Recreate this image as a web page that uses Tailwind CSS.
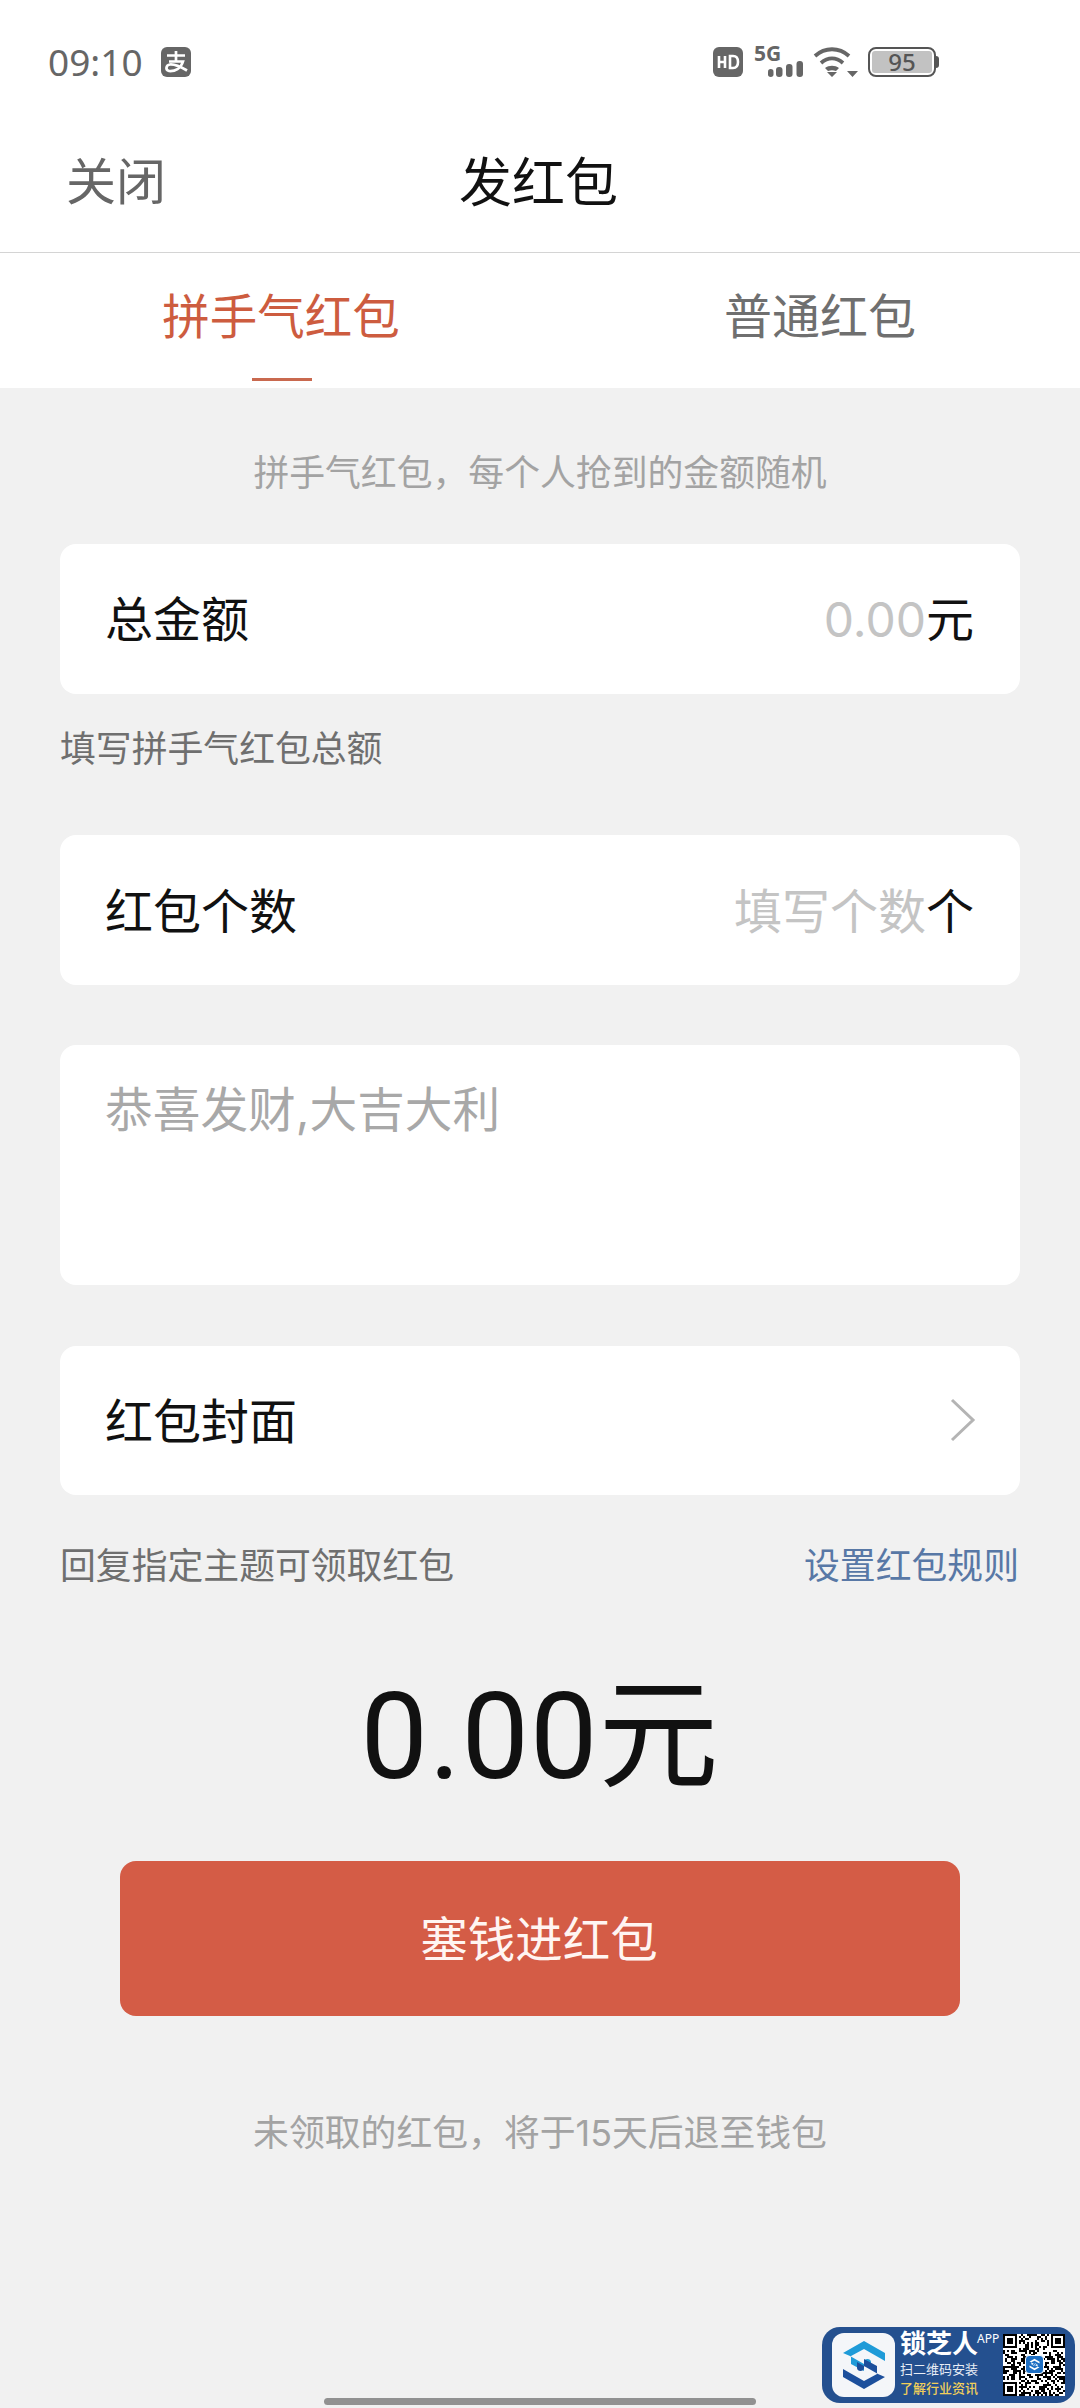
<!DOCTYPE html>
<html lang="zh-CN">
<head>
  <meta charset="UTF-8" />
  <title>发红包</title>
  <meta name="viewport" content="width=device-width, initial-scale=1.0" />
  <script src="https://cdn.jsdelivr.net/npm/@tailwindcss/browser@4"></script>
</head>
<body class="bg-[#f1f1f1] font-['Inter','Noto_Sans_CJK_SC',sans-serif]">
  <div class="relative w-[1080px] h-[2408px] overflow-hidden">
    <!-- status bar + title -->
    <div class="bg-white">
      <div class="h-[124px] flex items-center justify-between pl-[48px] pr-[141px] pb-[1px]">
        <div class="flex items-center gap-[18px]">
          <span class="text-[37px] leading-none text-[#666] font-['Noto_Sans',sans-serif]">09:10</span>
          <svg width="30" height="30" viewBox="0 0 30 30"><rect width="30" height="30" rx="6" fill="#666"/><path d="M6 8.500h18M15 4v10M8 14.500h14c-2 7-8 10-14 9.500-4-1-3-6 1-6.500 5-.5 10 2 17 6" fill="none" stroke="#fff" stroke-width="2.700"/></svg>
        </div>
        <div class="flex items-center">
          <svg width="30" height="30" viewBox="0 0 30 30"><rect width="30" height="30" rx="6" fill="#666"/><path d="M6 9v12M12 9v12M6 15h6M17 9v12h3c4 0 5-3 5-6s-1-6-5-6z" fill="none" stroke="#fff" stroke-width="2.600"/></svg>
          <div class="relative ml-[11px] w-[50px] h-[30px]">
            <span class="absolute left-0 top-[-5px] text-[21px] leading-[22px] font-bold text-[#666] font-['Noto_Sans',sans-serif]">5G</span>
            <svg class="absolute right-0 bottom-0" width="36" height="16" viewBox="0 0 36 16"><g fill="#666"><rect x="0" y="8" width="5.500" height="8" rx="2.700"/><rect x="8" y="6" width="6.500" height="10" rx="3"/><rect x="18" y="3" width="6.500" height="13" rx="3"/><rect x="28.500" y="0" width="6.500" height="16" rx="3"/></g></svg>
          </div>
          <svg class="ml-[9px]" width="46" height="30" viewBox="0 0 46 30"><g fill="none" stroke="#666" stroke-width="3.800"><path d="M2 9C12 0 26 0 36 9"/><path d="M8 16c7-6 15-6 22 0"/></g><path d="M12 21c4-3 10-3 14 0l-3 3c-3-1-5-1-8 0zM14 25h10l-5 5zM34 24h11l-5.500 6z" fill="#666"/></svg>
          <div class="ml-[9px] flex items-center">
            <div class="w-[68px] h-[30px] rounded-[8px] border-[2.500px] border-[#555] p-[2px] flex">
              <div class="flex-1 bg-[#c2c2c2] rounded-[3px] flex items-center justify-center text-[24px] leading-none font-medium text-[#555] font-['Noto_Sans',sans-serif]">95</div>
            </div>
            <div class="w-[3px] h-[12px] bg-[#555] rounded-r-[3px]"></div>
          </div>
        </div>
      </div>
      <div class="relative h-[128px] flex items-center justify-center border-b border-[#d4d4d4] box-content">
        <span class="absolute left-[66px] top-[27px] text-[50px] leading-[62px] text-[#666]">关闭</span>
        <span class="text-[53px] leading-[62px] text-[#111] mt-[-11px] mr-[3px]">发红包</span>
      </div>
      <!-- tabs -->
      <div class="h-[135px] flex">
        <div class="relative w-[562px] flex justify-center pt-[33px]">
          <span class="text-[47.500px] leading-[62px] text-[#cd5c3f]">拼手气红包</span>
          <div class="absolute left-[252px] top-[125px] w-[60px] h-[3px] bg-[#c9694f]"></div>
        </div>
        <div class="flex-1 flex justify-center pt-[33px] pr-[2px]">
          <span class="text-[48px] leading-[62px] text-[#6f6f6f]">普通红包</span>
        </div>
      </div>
    </div>

    <!-- form -->
    <div class="px-[60px]">
      <p class="h-[156px] pt-[61px] text-center text-[35.850px] leading-[48px] text-[#a3a3a3]">拼手气红包，每个人抢到的金额随机</p>
      <div class="h-[150px] bg-white rounded-[16px] pl-[45px] pr-[46px] pt-[2px] flex items-center justify-between">
        <span class="text-[48px] text-[#111]">总金额</span>
        <span class="text-[48px] text-[#111]"><span class="text-[#c4c4c4]">0.00</span>元</span>
      </div>
      <p class="mt-[30px] text-[35.850px] leading-[50px] text-[#6f6f6f] h-[111px]">填写拼手气红包总额</p>
      <div class="h-[150px] bg-white rounded-[16px] pl-[45px] pr-[46px] pt-[3px] flex items-center justify-between">
        <span class="text-[48px] text-[#111]">红包个数</span>
        <span class="text-[48px] text-[#111]"><span class="text-[#c4c4c4]">填写个数</span>个</span>
      </div>
      <div class="mt-[60px] h-[240px] bg-white rounded-[16px] pl-[45px] pr-[46px] pt-[34px]">
        <span class="text-[47.700px] leading-[62px] text-[#a8a8a8]">恭喜发财,大吉大利</span>
      </div>
      <div class="mt-[61px] h-[149px] bg-white rounded-[16px] pl-[45px] pr-[44px] pt-[2px] flex items-center justify-between">
        <span class="text-[48px] text-[#111]">红包封面</span>
        <svg class="mt-[-3px]" width="26" height="44" viewBox="0 0 26 44"><path d="M2 2l21 20L2 42" fill="none" stroke="#b4b4b4" stroke-width="3"/></svg>
      </div>
      <div class="mt-[46px] flex justify-between text-[35.850px] leading-[50px]">
        <span class="text-[#6f6f6f]">回复指定主题可领取红包</span>
        <span class="text-[#5878a6] mr-[1px]">设置红包规则</span>
      </div>
      <p class="mt-[71px] text-center text-[120px] leading-[150px] tracking-[1px] text-[#111] font-['Roboto','Noto_Sans_CJK_SC',sans-serif]">0.00元</p>
      <div class="mt-[49px] mx-[60px] h-[155px] rounded-[16px] bg-[#d45c46] pt-[2px] pr-[2px] flex items-center justify-center text-[47.500px] text-[#fff5f2]">塞钱进红包</div>
      <p class="mt-[92px] text-center text-[35.850px] leading-[50px] text-[#a3a3a3]">未领取的红包，将于15天后退至钱包</p>
    </div>

    <!-- watermark -->
    <div class="absolute left-[822px] top-[2327px] w-[253px] h-[76px] rounded-[18px] bg-[#24508f]">
      <div class="absolute left-[10px] top-[6px] w-[63px] h-[64px] rounded-[12px] bg-[#f4f6f9] flex items-center justify-center">
        <svg width="46" height="50" viewBox="0 0 46 50"><path d="M23 1L44 13v8L23 9 10 16v8l13 7v-9c0-4 7-4 7 0v6L9 16 2 13z" fill="#1f9bd8"/><path d="M23 49L2 37v-8l21 12 13-7v-8l-13-7v9c0 4-7 4-7 0v-6l21 12 7 3z" fill="#1c4f9c"/></svg>
      </div>
      <span class="absolute left-[78px] top-[1px] text-[26px] leading-[32px] font-bold text-white whitespace-nowrap">锁芝人</span>
      <span class="absolute left-[155px] top-[5px] text-[12px] leading-[13px] text-white font-['Noto_Sans',sans-serif]">APP</span>
      <span class="absolute left-[78px] top-[33px] text-[13px] leading-[18px] text-[#e8edf5] whitespace-nowrap">扫二维码安装</span>
      <span class="absolute left-[78px] top-[52px] text-[13px] leading-[18px] font-medium text-[#f0cf5a] whitespace-nowrap">了解行业资讯</span>
      <div class="absolute left-[181px] top-[7px] w-[62px] h-[62px] bg-white">
        <svg id="qr" width="62" height="62" viewBox="0 0 31 31"></svg>
        <div class="absolute left-[22px] top-[21px] w-[19px] h-[19px] rounded-[4px] bg-[#1d6fc4] border border-white flex items-center justify-center">
          <svg width="11" height="13" viewBox="0 0 46 50"><path d="M23 1L44 13v8L23 9 10 16v8l13 7v-9c0-4 7-4 7 0v6L9 16 2 13zM23 49L2 37v-8l21 12 13-7v-8l-13-7v9c0 4-7 4-7 0v-6l21 12 7 3z" fill="#fff"/></svg>
        </div>
      </div>
    </div>

    <!-- home indicator -->
    <div class="absolute left-[324px] top-[2398px] w-[432px] h-[7px] rounded-full bg-[#919191]"></div>
  </div>
  <script>
    // qr pattern, only has to look like one
    let svg = '', s = 7;
    const finder = (x, y) => {
      svg += `<path d="M${x} ${y}h7v7h-7zM${x + 1} ${y + 1}v5h5v-5z" fill-rule="evenodd"/><rect x="${x + 2}" y="${y + 2}" width="3" height="3"/>`;
    };
    for (let y = 0; y < 31; y++) {
      for (let x = 0; x < 31; x++) {
        s = (s * 75 + 74) % 65537;
        const corner = (x < 8 && y < 8) || (x > 22 && y < 8) || (x < 8 && y > 22);
        if (!corner && s % 2) svg += `<rect x="${x}" y="${y}" width="1" height="1"/>`;
      }
    }
    finder(0, 0); finder(24, 0); finder(0, 24);
    document.getElementById('qr').innerHTML = svg;
  </script>
</body>
</html>
